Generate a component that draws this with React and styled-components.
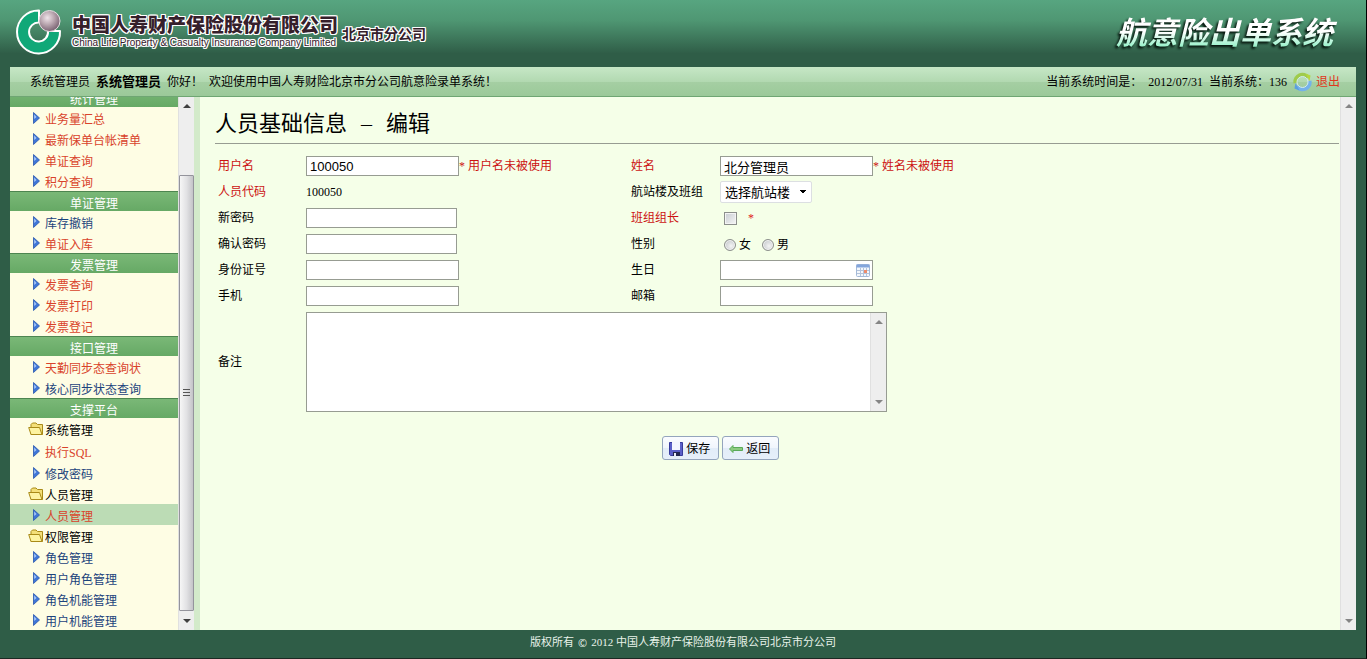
import React, { useState } from "react";
import styled, { createGlobalStyle, css } from "styled-components";

const menu = [
  {
    title: "统计管理",
    items: [
      { label: "业务量汇总", hot: true },
      { label: "最新保单台帐清单", hot: true },
      { label: "单证查询", hot: true },
      { label: "积分查询", hot: true },
    ],
  },
  {
    title: "单证管理",
    items: [{ label: "库存撤销" }, { label: "单证入库", hot: true }],
  },
  {
    title: "发票管理",
    items: [
      { label: "发票查询", hot: true },
      { label: "发票打印", hot: true },
      { label: "发票登记", hot: true },
    ],
  },
  {
    title: "接口管理",
    items: [{ label: "天勤同步态查询状", hot: true }, { label: "核心同步状态查询" }],
  },
  {
    title: "支撑平台",
    items: [
      { label: "系统管理", folder: true },
      { label: "执行SQL", hot: true, tall: true },
      { label: "修改密码" },
      { label: "人员管理", folder: true },
      { label: "人员管理", hot: true, active: true },
      { label: "权限管理", folder: true },
      { label: "角色管理" },
      { label: "用户角色管理" },
      { label: "角色机能管理" },
      { label: "用户机能管理" },
    ],
  },
];

const LogoMark = () => (
  <svg width="48" height="48" viewBox="0 0 48 48" aria-hidden="true">
    <defs>
      <radialGradient id="ball" cx="0.4" cy="0.35" r="0.7">
        <stop offset="0" stopColor="#efe4e9" />
        <stop offset="0.45" stopColor="#bba8b1" />
        <stop offset="1" stopColor="#71596a" />
      </radialGradient>
    </defs>
    <path
      d="M24 2.500A21.500 21.500 0 1 0 45 23H33a9.500 9.500 0 1 1-9-8.500z"
      fill="#10a878"
      stroke="#fff"
      strokeWidth="2"
      strokeLinejoin="round"
    />
    <circle cx="34.500" cy="13" r="10.500" fill="url(#ball)" stroke="#e9dfe4" strokeWidth="1" />
  </svg>
);

const ArrowBullet = () => (
  <svg width="7" height="12" viewBox="0 0 7 12" aria-hidden="true">
    <path d="M0.500 0.500L6.500 6L0.500 11.500z" fill="#3f76d8" stroke="#2756ad" strokeWidth="0.800" />
    <path d="M1.200 2.500L3.500 5L1.200 7z" fill="#a9c8f7" />
  </svg>
);

const FolderIcon = () => (
  <svg width="16" height="14" viewBox="0 0 16 14" aria-hidden="true">
    <path d="M3 12.500V2.500L4.500 1H8L9.500 2.500H14.500V12.500z" fill="#f3df78" stroke="#a98a17" />
    <path d="M0.700 5.500H11.500L14 12.500H3z" fill="#fdf3a0" stroke="#a98a17" strokeLinejoin="round" />
  </svg>
);

const ExitIcon = () => (
  <svg width="19" height="20" viewBox="0 0 19 20" aria-hidden="true">
    <path d="M2.500 11A7 7 0 0 1 15 5.500" fill="none" stroke="#9fcb4c" strokeWidth="4" />
    <path d="M12.500 1.500L17.500 3.500L16.500 9z" fill="#b5d63f" />
    <path d="M16.500 9A7 7 0 0 1 4 14.500" fill="none" stroke="#74b2ea" strokeWidth="4" />
    <path d="M6.500 18.500L1.500 16.500L2.500 11z" fill="#5b9fe0" />
    <circle cx="9.500" cy="10" r="5.500" fill="none" stroke="#d3ecf0" />
  </svg>
);

const CalendarIcon = () => (
  <svg width="14" height="13" viewBox="0 0 14 13" aria-hidden="true">
    <rect x="0.500" y="0.500" width="13" height="12" rx="1" fill="#f3f7fc" stroke="#a3b9d8" />
    <rect x="0.500" y="0.500" width="13" height="3" fill="#83a5dc" />
    <path d="M1 6.500H13M1 9.500H13M4.500 4V12M7.500 4V12M10.500 4V12" stroke="#b4c3da" />
    <rect x="8" y="6" width="3" height="3" fill="#ec8a6a" />
  </svg>
);

const SaveIcon = () => (
  <svg width="14" height="14" viewBox="0 0 14 14" aria-hidden="true">
    <path d="M0.500 0.500H13.500V13.500H1.500L0.500 12.500z" fill="#5a5fc8" stroke="#373a9c" />
    <rect x="3" y="0" width="8" height="8" fill="#f3f6ff" />
    <rect x="4" y="10" width="7" height="4" fill="#22264f" />
    <rect x="5" y="11" width="2" height="3" fill="#e8ecf8" />
  </svg>
);

const BackIcon = () => (
  <svg width="14" height="8" viewBox="0 0 14 8" aria-hidden="true">
    <path d="M0.500 4L4 0.500V2.500H13.500V5.500H4V7.500z" fill="#8ccb80" stroke="#5aaa58" strokeLinejoin="round" />
  </svg>
);

const ScrollArrow = ({ down, dark }) => (
  <svg width="8" height="4" viewBox="0 0 8 4" aria-hidden="true">
    <path d={down ? "M0 0H8L4 4z" : "M0 4H8L4 0z"} fill={dark ? "#404040" : "#858585"} />
  </svg>
);

const ScrollRail = ({ thumb }) => (
  <Rail>
    <ScrollArrow dark={thumb} />
    {thumb && (
      <Thumb>
        <Grip />
      </Thumb>
    )}
    <ScrollArrow down dark={thumb} />
  </Rail>
);

const App = () => {
  const [form, setForm] = useState({
    username: "100050",
    name: "北分管理员",
    password: "",
    confirm: "",
    idNumber: "",
    birthday: "",
    mobile: "",
    email: "",
    remark: "",
  });

  const bind = (id) => ({
    id,
    name: id,
    value: form[id],
    onChange: (e) => setForm({ ...form, [id]: e.target.value }),
  });

  return (
    <Page>
      <GlobalStyle />
      <Banner>
        <Brand>
          <LogoMark />
          <BrandNames>
            <CompanyName>中国人寿财产保险股份有限公司</CompanyName>
            <CompanyEnglish>China Life Property &amp; Casualty Insurance Company Limited</CompanyEnglish>
          </BrandNames>
          <Branch>北京市分公司</Branch>
        </Brand>
        <SystemName>航意险出单系统</SystemName>
      </Banner>

      <InfoBar>
        <InfoGroup>
          <span>系统管理员</span>
          <UserName>系统管理员</UserName>
          <span>你好！</span>
          <span>欢迎使用中国人寿财险北京市分公司航意险录单系统！</span>
        </InfoGroup>
        <InfoGroup>
          <span>当前系统时间是：</span>
          <span>2012/07/31</span>
          <span>当前系统：136</span>
          <ExitLink href="#exit">
            <ExitIcon />
            退出
          </ExitLink>
        </InfoGroup>
      </InfoBar>

      <Body>
        <Sidebar>
          <MenuList>
            {menu.map((section) => (
              <React.Fragment key={section.title}>
                <MenuTitle>{section.title}</MenuTitle>
                {section.items.map((item, i) => (
                  <MenuItem
                    key={i}
                    href="#menu"
                    $hot={item.hot}
                    $folder={item.folder}
                    $active={item.active}
                    $tall={item.tall}
                  >
                    <MenuIcon>{item.folder ? <FolderIcon /> : <ArrowBullet />}</MenuIcon>
                    {item.label}
                  </MenuItem>
                ))}
              </React.Fragment>
            ))}
          </MenuList>
          <ScrollRail thumb />
        </Sidebar>

        <Content>
          <Title>
            <span>人员基础信息</span>
            <span>–</span>
            <span>编辑</span>
          </Title>
          <Form onSubmit={(e) => e.preventDefault()}>
            <Fields>
              <Label htmlFor="username" $required>用户名</Label>
              <Cell>
                <Input {...bind("username")} />
                <Hint>* 用户名未被使用</Hint>
              </Cell>
              <Label htmlFor="name" $required>姓名</Label>
              <Cell>
                <Input {...bind("name")} />
                <Hint>* 姓名未被使用</Hint>
              </Cell>

              <Caption $required>人员代码</Caption>
              <Cell>100050</Cell>
              <Label htmlFor="terminal">航站楼及班组</Label>
              <Cell>
                <Select id="terminal">
                  <option>选择航站楼</option>
                </Select>
              </Cell>

              <Label htmlFor="password">新密码</Label>
              <Cell>
                <Input type="password" $short {...bind("password")} />
              </Cell>
              <Label htmlFor="leader" $required>班组组长</Label>
              <Choices>
                <Check type="checkbox" id="leader" />
                <Star>*</Star>
              </Choices>

              <Label htmlFor="confirm">确认密码</Label>
              <Cell>
                <Input type="password" $short {...bind("confirm")} />
              </Cell>
              <Caption id="gender">性别</Caption>
              <Choices role="radiogroup" aria-labelledby="gender">
                <RadioLabel>
                  <Radio type="radio" name="gender" value="f" />女
                </RadioLabel>
                <RadioLabel>
                  <Radio type="radio" name="gender" value="m" />男
                </RadioLabel>
              </Choices>

              <Label htmlFor="idNumber">身份证号</Label>
              <Cell>
                <Input {...bind("idNumber")} />
              </Cell>
              <Label htmlFor="birthday">生日</Label>
              <Cell>
                <DateBox>
                  <DateInput {...bind("birthday")} />
                  <CalendarIcon />
                </DateBox>
              </Cell>

              <Label htmlFor="mobile">手机</Label>
              <Cell>
                <Input {...bind("mobile")} />
              </Cell>
              <Label htmlFor="email">邮箱</Label>
              <Cell>
                <Input {...bind("email")} />
              </Cell>

              <Label htmlFor="remark">备注</Label>
              <RemarkCell>
                <RemarkBox>
                  <Remark {...bind("remark")} />
                  <ScrollRail />
                </RemarkBox>
              </RemarkCell>
            </Fields>
            <Actions>
              <Button type="submit">
                <SaveIcon />
                保存
              </Button>
              <Button type="button">
                <BackIcon />
                返回
              </Button>
            </Actions>
          </Form>
        </Content>
        <ScrollRail />
      </Body>

      <Footer>
        <span>版权所有</span>
        <Copy>©</Copy>
        <span>2012 中国人寿财产保险股份有限公司北京市分公司</span>
      </Footer>
    </Page>
  );
};

const serif = `"Liberation Serif", "Noto Sans CJK SC", serif`;
const sans = `"Liberation Sans", "Noto Sans CJK SC", sans-serif`;

const whiteOutline = css`
  text-shadow: 1px 0 #fff, -1px 0 #fff, 0 1px #fff, 0 -1px #fff,
    1px 1px #fff, -1px -1px #fff, 1px -1px #fff, -1px 1px #fff;
`;

const GlobalStyle = createGlobalStyle`
  * {
    box-sizing: border-box;
  }
  body {
    margin: 0;
    background: #2f5d47;
    color: #000;
    font: 12px/18px ${serif};
  }
`;

const Page = styled.div`
  display: flex;
  flex-direction: column;
  height: 100vh;
  padding: 0 10px;
  background: #2f5d47;
  border-right: 1px solid #000;
  border-bottom: 1px solid #1c2a23;
`;

const Banner = styled.header`
  display: flex;
  flex: none;
  justify-content: space-between;
  height: 67px;
  margin: 0 -10px;
  padding: 0 27px 0 15px;
  background: linear-gradient(#57a580, #4f9773 30%, #2f5d47 80%);
`;

const Brand = styled.div`
  display: flex;
  align-items: center;
  padding-bottom: 4px;
`;

const BrandNames = styled.div`
  display: flex;
  flex-direction: column;
  margin-left: 9px;
  padding-top: 3px;
  color: #35202b;
  white-space: nowrap;
  ${whiteOutline}
`;

const CompanyName = styled.div`
  font: 900 19px/20px ${sans};
`;

const CompanyEnglish = styled.div`
  font: 10px/14px ${sans};
`;

const Branch = styled.div`
  margin-left: 4px;
  padding-top: 4px;
  color: #35202b;
  font: bold 14px/20px ${sans};
  ${whiteOutline}
`;

const SystemName = styled.h1`
  align-self: center;
  margin: 0;
  padding: 0 6px;
  font: italic bold 31px/40px ${sans};
  color: transparent;
  background: linear-gradient(#fff 45%, #8df0c4 85%);
  background-clip: text;
  filter: drop-shadow(-2px 2px 1px #06150d);
`;

const InfoBar = styled.div`
  display: flex;
  flex: none;
  justify-content: space-between;
  height: 30px;
  padding: 0 16px 0 20px;
  background: linear-gradient(#c6e7c6, #b2d9b1 50%, #a5cfa3 51%, #9bc999);
  border-bottom: 1px solid #6fa673;
`;

const InfoGroup = styled.div`
  display: flex;
  align-items: center;
  gap: 6px;
  white-space: nowrap;
`;

const UserName = styled.strong`
  font-size: 13px;
`;

const ExitLink = styled.a`
  display: flex;
  align-items: center;
  gap: 4px;
  color: #e0371c;
  text-decoration: none;
`;

const Body = styled.div`
  display: flex;
  flex: 1;
  min-height: 0;
  background: #f5ffe8;
`;

const Sidebar = styled.nav`
  display: flex;
  flex: none;
  width: 190px;
  background: #fefde4;
  border-right: 6px solid #d3eaca;
`;

/* scrolled to the end: the overflow is hidden at the top */
const MenuList = styled.div`
  display: flex;
  flex: 1;
  flex-direction: column;
  justify-content: flex-end;
  overflow: hidden;
`;

const MenuTitle = styled.div`
  flex: none;
  height: 20px;
  color: #fff;
  line-height: 24px;
  text-align: center;
  background: linear-gradient(#7ab877, #66a965);
  border-top: 1px solid #4d8550;
`;

const MenuItem = styled.a`
  display: flex;
  flex: none;
  align-items: center;
  height: ${(p) => (p.$tall ? 23 : 21)}px;
  padding: 4px 0 0 18px;
  color: ${(p) => (p.$folder ? "#000" : p.$hot ? "#d9432b" : "#1c437c")};
  background: ${(p) => (p.$active ? "#bcdcb5" : "transparent")};
  text-decoration: none;
  white-space: nowrap;
`;

const MenuIcon = styled.span`
  display: flex;
  justify-content: center;
  width: 16px;
  margin-right: 1px;
  padding-bottom: 3px;
`;

const Rail = styled.div`
  display: flex;
  flex: none;
  flex-direction: column;
  align-items: center;
  justify-content: space-between;
  width: 16px;
  padding: 7px 0;
  background: #eeeeee;
  border-left: 1px solid #e0e0e0;
`;

const Thumb = styled.div`
  display: flex;
  align-items: center;
  justify-content: center;
  width: 15px;
  height: 84%;
  margin: auto 0 8px;
  background: linear-gradient(90deg, #f6f6f6, #e2e2e4 50%, #c4c4c8);
  border: 1px solid #94949c;
  border-radius: 1px;
`;

const Grip = styled.span`
  width: 7px;
  height: 8px;
  background: repeating-linear-gradient(#555 0 1px, transparent 1px 3px);
`;

const Content = styled.main`
  flex: 1;
  min-width: 0;
  padding: 8px 1px 0 15px;
  overflow: hidden;
`;

const Title = styled.h2`
  display: flex;
  gap: 14px;
  margin: 0;
  padding: 1px 0;
  font: 22px/36px ${serif};
  border-bottom: 1px solid #979c92;
`;

const Form = styled.form`
  width: 90%;
`;

const Fields = styled.div`
  display: grid;
  grid-template-columns: 88px 325px 89px 1fr;
  grid-auto-rows: minmax(26px, auto);
  padding: 9px 0 0 3px;
`;

const labelStyle = css`
  align-self: center;
  color: ${(p) => (p.$required ? "#cc1111" : "#000")};
`;

const Label = styled.label`
  ${labelStyle}
`;

const Caption = styled.span`
  ${labelStyle}
`;

const Cell = styled.div`
  display: flex;
  align-items: center;
  white-space: nowrap;
`;

const Input = styled.input`
  width: ${(p) => (p.$short ? 151 : 153)}px;
  height: 20px;
  padding: 0 3px;
  font: 13px ${sans};
  background: #fff;
  border: 1px solid #979c92;
`;

const DateBox = styled.div`
  display: flex;
  align-items: center;
  width: 153px;
  height: 20px;
  padding-right: 2px;
  background: #fff;
  border: 1px solid #979c92;
`;

const DateInput = styled.input`
  flex: 1;
  min-width: 0;
  padding: 0 3px;
  font: 13px ${sans};
  background: none;
  border: 0;
`;

const Hint = styled.span`
  color: #cc1111;
`;

const Select = styled.select`
  width: 92px;
  height: 22px;
  padding: 0 4px;
  appearance: none;
  font: 13px ${sans};
  color: #000;
  background: linear-gradient(to bottom right, #000 50%, transparent 50%) 82px 8px / 4px 4px no-repeat,
    linear-gradient(to bottom left, #000 50%, transparent 50%) 78px 8px / 4px 4px no-repeat, #fff;
  border: 1px solid #dcdfe2;
  border-radius: 2px;
`;

const Choices = styled.div`
  display: flex;
  align-items: center;
  padding-left: 4px;
  gap: 11px;
`;

const Check = styled.input`
  width: 13px;
  height: 13px;
  margin: 0;
  appearance: none;
  background: linear-gradient(135deg, #c8ccd2, #f6f6f6);
  border: 1px solid #8c8f8c;
  box-shadow: inset 0 0 0 1px #f4f4f4;
  &:checked {
    background: #4a7fdc;
  }
`;

const Star = styled.span`
  color: #e02020;
`;

const RadioLabel = styled.label`
  display: flex;
  align-items: center;
  gap: 3px;
  padding-top: 2px;
`;

const Radio = styled.input`
  width: 12px;
  height: 12px;
  margin: 0;
  appearance: none;
  background: radial-gradient(circle at 60% 60%, #f4f4f4, #b9bdc2);
  border: 1px solid #8c8f8c;
  border-radius: 50%;
  box-shadow: inset 0 0 0 1px #f4f4f4;
  &:checked {
    background: #4a7fdc;
  }
`;

const RemarkCell = styled.div`
  grid-column: span 3;
  padding: 3px 0;
`;

const RemarkBox = styled.div`
  display: flex;
  max-width: 581px;
  height: 100px;
  background: #fff;
  border: 1px solid #979c92;
`;

const Remark = styled.textarea`
  flex: 1;
  padding: 3px;
  font: 13px ${sans};
  background: none;
  border: 0;
  resize: none;
`;

const Actions = styled.div`
  display: flex;
  justify-content: center;
  gap: 3px;
  padding-top: 21px;
`;

const Button = styled.button`
  display: flex;
  align-items: center;
  gap: 3px;
  height: 24px;
  padding: 2px 8px 0 6px;
  color: #000;
  font: 12px/18px ${serif};
  background: linear-gradient(#fafcff, #f0f5fc 50%, #e2ecf8 51%, #e6effa);
  border: 1px solid #94a5bd;
  border-radius: 3px;
`;

const Footer = styled.footer`
  display: flex;
  flex: none;
  justify-content: center;
  gap: 4px;
  height: 28px;
  color: #e8f3ea;
  font-size: 11px;
  line-height: 25px;
`;

const Copy = styled.span`
  font-family: "Noto Sans CJK SC", sans-serif;
`;

export default App;
